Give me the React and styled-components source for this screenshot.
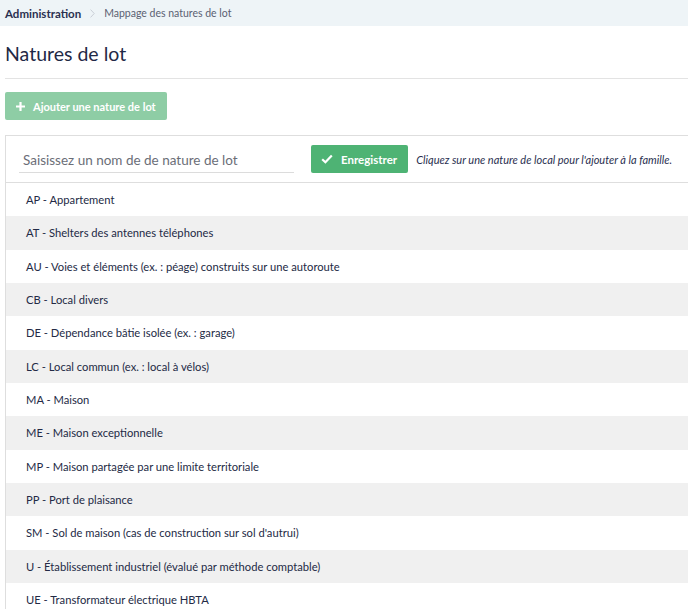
import React from 'react';
import styled, { createGlobalStyle } from 'styled-components';

const GlobalStyle = createGlobalStyle`
  html, body {
    margin: 0;
    padding: 0;
    background: #fff;
    overflow: hidden;
  }
  body {
    font-family: Lato, "Open Sans", sans-serif;
    color: #2a3050;
  }
`;

const Breadcrumb = styled.nav`
  display: flex;
  align-items: center;
  height: 26px;
  padding-left: 5px;
  background: #eef4f7;
  font-size: 11px;
`;

const Crumb = styled.span`
  color: ${(p) => (p.current ? '#5b6172' : '#2a3050')};
  font-weight: ${(p) => (p.current ? 400 : 700)};
  font-size: ${(p) => (p.current ? '10.5px' : '11.5px')};
`;

const Separator = styled.span`
  display: inline-flex;
  margin: 0 9px 0 9px;
`;

const Content = styled.main`
  padding-left: 5px;
  margin-right: -2px;
`;

const Title = styled.h1`
  margin: 0;
  padding: 16px 0 13px;
  font-size: 19.5px;
  font-weight: 400;
  color: #1f2946;
  border-bottom: 1px solid #e3e3e3;
`;

const AddButton = styled.button`
  display: inline-flex;
  align-items: center;
  gap: 7px;
  margin-top: 13px;
  height: 28px;
  padding: 0 11px 0 10px;
  border: none;
  border-radius: 2px;
  background: #8ecda5;
  color: #fff;
  font-family: Lato, sans-serif;
  font-size: 11px;
  font-weight: 700;
`;

const Panel = styled.section`
  margin-top: 15px;
  border: 1px solid #dedede;
`;

const FormRow = styled.div`
  display: flex;
  align-items: center;
  height: 46px;
  padding-left: 13px;
  border-bottom: 1px solid #dedede;
`;

const NameInput = styled.input`
  box-sizing: border-box;
  width: 275px;
  height: 26px;
  margin-top: 2px;
  padding: 0 4px;
  border: none;
  border-bottom: 1px solid #dcdcdc;
  font-family: Lato, sans-serif;
  font-size: 13.5px;
  color: #333;
  outline: none;
  &::placeholder {
    color: #6b6e77;
  }
`;

const SaveButton = styled.button`
  display: inline-flex;
  align-items: center;
  gap: 8px;
  margin-left: 17px;
  height: 28px;
  padding: 0 11px 0 10px;
  border: none;
  border-radius: 2px;
  background: #4eb374;
  color: #fff;
  font-family: Lato, sans-serif;
  font-size: 11.5px;
  font-weight: 700;
`;

const Hint = styled.p`
  margin: 0 0 0 8px;
  font-size: 11px;
  font-style: italic;
  color: #2a3050;
  white-space: nowrap;
`;

const List = styled.ul`
  list-style: none;
  margin: 0;
  padding: 0;
`;

const Item = styled.li`
  display: flex;
  align-items: center;
  height: 33.33px;
  padding-left: 20px;
  font-size: 11.2px;
  color: #232a45;
  background: ${(p) => (p.odd ? '#f0f0f0' : '#fff')};
`;

const ChevronIcon = () => (
  <svg width="5" height="9" viewBox="0 0 5 9">
    <path d="M0.6 0.6L4.2 4.5L0.6 8.4" fill="none" stroke="#c9ced6" strokeWidth="1" />
  </svg>
);

const PlusIcon = () => (
  <svg width="11" height="11" viewBox="0 0 11 11">
    <path d="M5.5 1v9M1 5.5h9" stroke="#fff" strokeWidth="2.2" />
  </svg>
);

const CheckIcon = () => (
  <svg width="12" height="10" viewBox="0 0 12 10">
    <path d="M1.2 5.2l3.2 3.1L10.8 1.6" fill="none" stroke="#fff" strokeWidth="2.2" />
  </svg>
);

const natures = [
  'AP - Appartement',
  'AT - Shelters des antennes téléphones',
  'AU - Voies et éléments (ex. : péage) construits sur une autoroute',
  'CB - Local divers',
  'DE - Dépendance bâtie isolée (ex. : garage)',
  'LC - Local commun (ex. : local à vélos)',
  'MA - Maison',
  'ME - Maison exceptionnelle',
  'MP - Maison partagée par une limite territoriale',
  'PP - Port de plaisance',
  "SM - Sol de maison (cas de construction sur sol d'autrui)",
  'U - Établissement industriel (évalué par méthode comptable)',
  'UE - Transformateur électrique HBTA',
];

export default function App() {
  return (
    <>
      <GlobalStyle />
      <Breadcrumb>
        <Crumb>Administration</Crumb>
        <Separator>
          <ChevronIcon />
        </Separator>
        <Crumb current>Mappage des natures de lot</Crumb>
      </Breadcrumb>
      <Content>
        <Title>Natures de lot</Title>
        <AddButton>
          <PlusIcon />
          Ajouter une nature de lot
        </AddButton>
        <Panel>
          <FormRow>
            <NameInput placeholder="Saisissez un nom de de nature de lot" />
            <SaveButton>
              <CheckIcon />
              Enregistrer
            </SaveButton>
            <Hint>Cliquez sur une nature de local pour l'ajouter à la famille.</Hint>
          </FormRow>
          <List>
            {natures.map((n, i) => (
              <Item key={n} odd={i % 2 === 1}>
                {n}
              </Item>
            ))}
          </List>
        </Panel>
      </Content>
    </>
  );
}
